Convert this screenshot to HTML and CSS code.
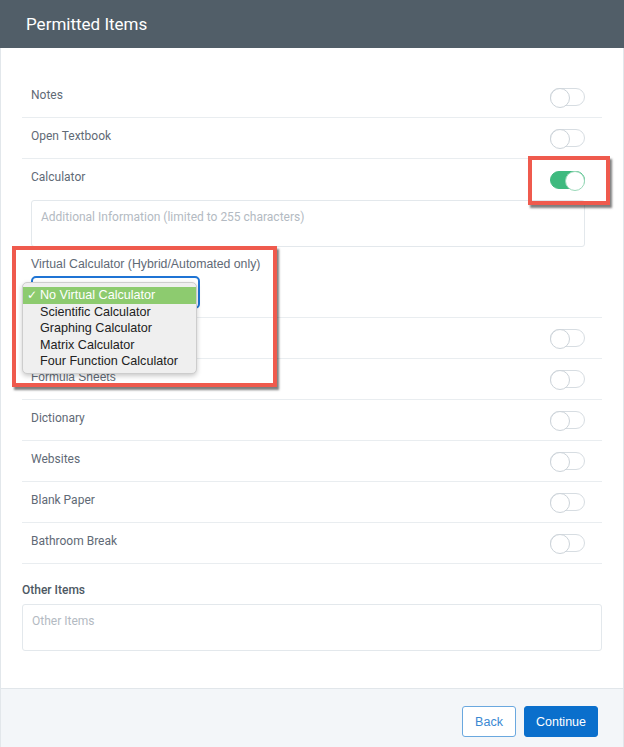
FILE: index.html
```html
<!DOCTYPE html>
<html>
<head>
<meta charset="utf-8">
<link rel="stylesheet" href="styles.css">
</head>
<body>
<div class="card">
  <div class="header"><h1 class="title">Permitted Items</h1></div>
  <div class="content">
    <div class="row"><span class="label">Notes</span><span class="toggle"></span></div>
    <div class="row"><span class="label">Open Textbook</span><span class="toggle"></span></div>
    <div class="calc">
      <div class="calc-head"><span class="label">Calculator</span><span class="toggle on"></span></div>
      <div class="textarea"><span class="placeholder">Additional Information (limited to 255 characters)</span></div>
      <div class="vlabel">Virtual Calculator (Hybrid/Automated only)</div>
      <div class="select">
        <div class="menu">
          <div class="opt sel"><span class="check">✓</span>No Virtual Calculator</div>
          <div class="opt">Scientific Calculator</div>
          <div class="opt">Graphing Calculator</div>
          <div class="opt">Matrix Calculator</div>
          <div class="opt">Four Function Calculator</div>
        </div>
      </div>
    </div>
    <div class="row"><span class="label"></span><span class="toggle"></span></div>
    <div class="row"><span class="label alt">Formula Sheets</span><span class="toggle"></span></div>
    <div class="row"><span class="label">Dictionary</span><span class="toggle"></span></div>
    <div class="row"><span class="label">Websites</span><span class="toggle"></span></div>
    <div class="row"><span class="label">Blank Paper</span><span class="toggle"></span></div>
    <div class="row"><span class="label">Bathroom Break</span><span class="toggle"></span></div>
    <div class="other-label">Other Items</div>
    <div class="other-input"><span class="placeholder">Other Items</span></div>
  </div>
  <div class="footer">
    <button class="btn back">Back</button>
    <button class="btn continue">Continue</button>
  </div>
  <div class="mark mark-toggle"></div>
  <div class="mark mark-select"></div>
</div>
</body>
</html>
```
FILE: styles.css
```css
* { box-sizing: border-box; }
html, body { margin: 0; padding: 0; background: #fff; }
body { font-family: Roboto, "Liberation Sans", sans-serif; }
.card {
  position: relative;
  width: 624px;
  height: 747px;
  border-left: 1px solid #e2e7eb;
  border-right: 1px solid #e2e7eb;
  display: flex;
  flex-direction: column;
}
.header {
  height: 48px;
  background: #515e68;
  margin: 0 -1px;
  display: flex;
  align-items: center;
  padding-left: 26px;
}
.title {
  margin: 0;
  font-size: 17px;
  font-weight: 400;
  color: #fff;
  line-height: 20px;
}
.content {
  flex: 1;
  padding: 29px 21px 0 21px;
}
.row {
  height: 41px;
  border-bottom: 1px solid #e9edf0;
  display: flex;
  align-items: center;
  justify-content: space-between;
  padding: 0 17px 0 9px;
}
.label {
  font-size: 12px;
  color: #5f6a76;
  line-height: 15px;
  margin-top: -3px;
}
.label.alt { font-family: "Liberation Sans", Arial, sans-serif; }
.toggle {
  width: 35px;
  height: 18px;
  border: 1px solid #d7dde2;
  border-radius: 9px;
  background: #fff;
  position: relative;
}
.toggle::before {
  content: "";
  position: absolute;
  left: -1px;
  top: -1px;
  width: 18px;
  height: 18px;
  border-radius: 50%;
  border: 1px solid #ccd3d9;
  background: #fff;
}
.toggle.on {
  background: #3fba7f;
  border-color: #3fba7f;
}
.toggle.on::before {
  left: auto;
  right: -1px;
  border-color: #9ad9b9;
}
.calc {
  border-bottom: 1px solid #e9edf0;
  padding: 0 17px 8px 9px;
}
.calc-head {
  height: 37px;
  display: flex;
  align-items: center;
  justify-content: space-between;
}
.calc-head .label { margin-top: 0; }
.calc-head .toggle { margin-top: 4px; }
.textarea {
  margin-top: 4px;
  height: 47px;
  border: 1px solid #e3e8ec;
  border-radius: 3px;
  padding: 5px 9px;
}
.placeholder {
  font-size: 12px;
  line-height: 14px;
  color: #b3bac2;
}
.vlabel {
  margin-top: 10px;
  font-family: "Liberation Sans", Arial, sans-serif;
  font-size: 12.3px;
  line-height: 15px;
  color: #5f6a76;
}
.select {
  position: relative;
  margin-top: 4px;
  width: 169px;
  height: 33px;
  border: 2px solid #1f74d4;
  border-radius: 5px;
  background: #fff;
}
.menu {
  position: absolute;
  left: -11px;
  top: 4px;
  width: 175px;
  padding: 4px 0 3px;
  background: #efefef;
  border: 1px solid #cdcdcd;
  border-radius: 5px;
  box-shadow: 0 2px 5px rgba(0,0,0,0.22);
  z-index: 2;
}
.opt {
  font-family: "Liberation Sans", Arial, sans-serif;
  font-size: 12.6px;
  line-height: 16.5px;
  color: #222;
  padding-left: 17px;
  white-space: nowrap;
}
.opt.sel {
  background: #8dcb6f;
  color: #fff;
  position: relative;
}
.check {
  position: absolute;
  left: 4px;
  font-family: "DejaVu Sans", sans-serif;
  font-size: 12px;
}
.other-label {
  margin-top: 19px;
  font-size: 12px;
  font-weight: 500;
  line-height: 15px;
  color: #4d5863;
}
.other-input {
  margin-top: 6px;
  height: 47px;
  border: 1px solid #e3e8ec;
  border-radius: 3px;
  padding: 5px 9px;
}
.footer {
  height: 59px;
  background: #f3f6f9;
  border-top: 1px solid #e1e6ea;
  display: flex;
  justify-content: flex-end;
  align-items: flex-start;
  gap: 8px;
  padding: 17px 25px 0 0;
}
.btn {
  font-family: "Liberation Sans", Arial, sans-serif;
  font-size: 12.5px;
  height: 31px;
  border-radius: 3px;
  padding: 0;
  cursor: pointer;
}
.back {
  width: 54px;
  background: #fff;
  border: 1px solid #6aa8df;
  color: #3a88d2;
}
.continue {
  width: 74px;
  background: #0a6fcc;
  border: 1px solid #0a6fcc;
  color: #fff;
}
.mark {
  position: absolute;
  border: 4px solid #ef5a4d;
  box-shadow: 2px 3px 2px rgba(40,40,40,0.6);
  pointer-events: none;
  z-index: 3;
}
.mark-toggle {
  left: 527px;
  top: 156px;
  width: 82px;
  height: 49px;
}
.mark-select {
  left: 11px;
  top: 246px;
  width: 265px;
  height: 141px;
}
```
